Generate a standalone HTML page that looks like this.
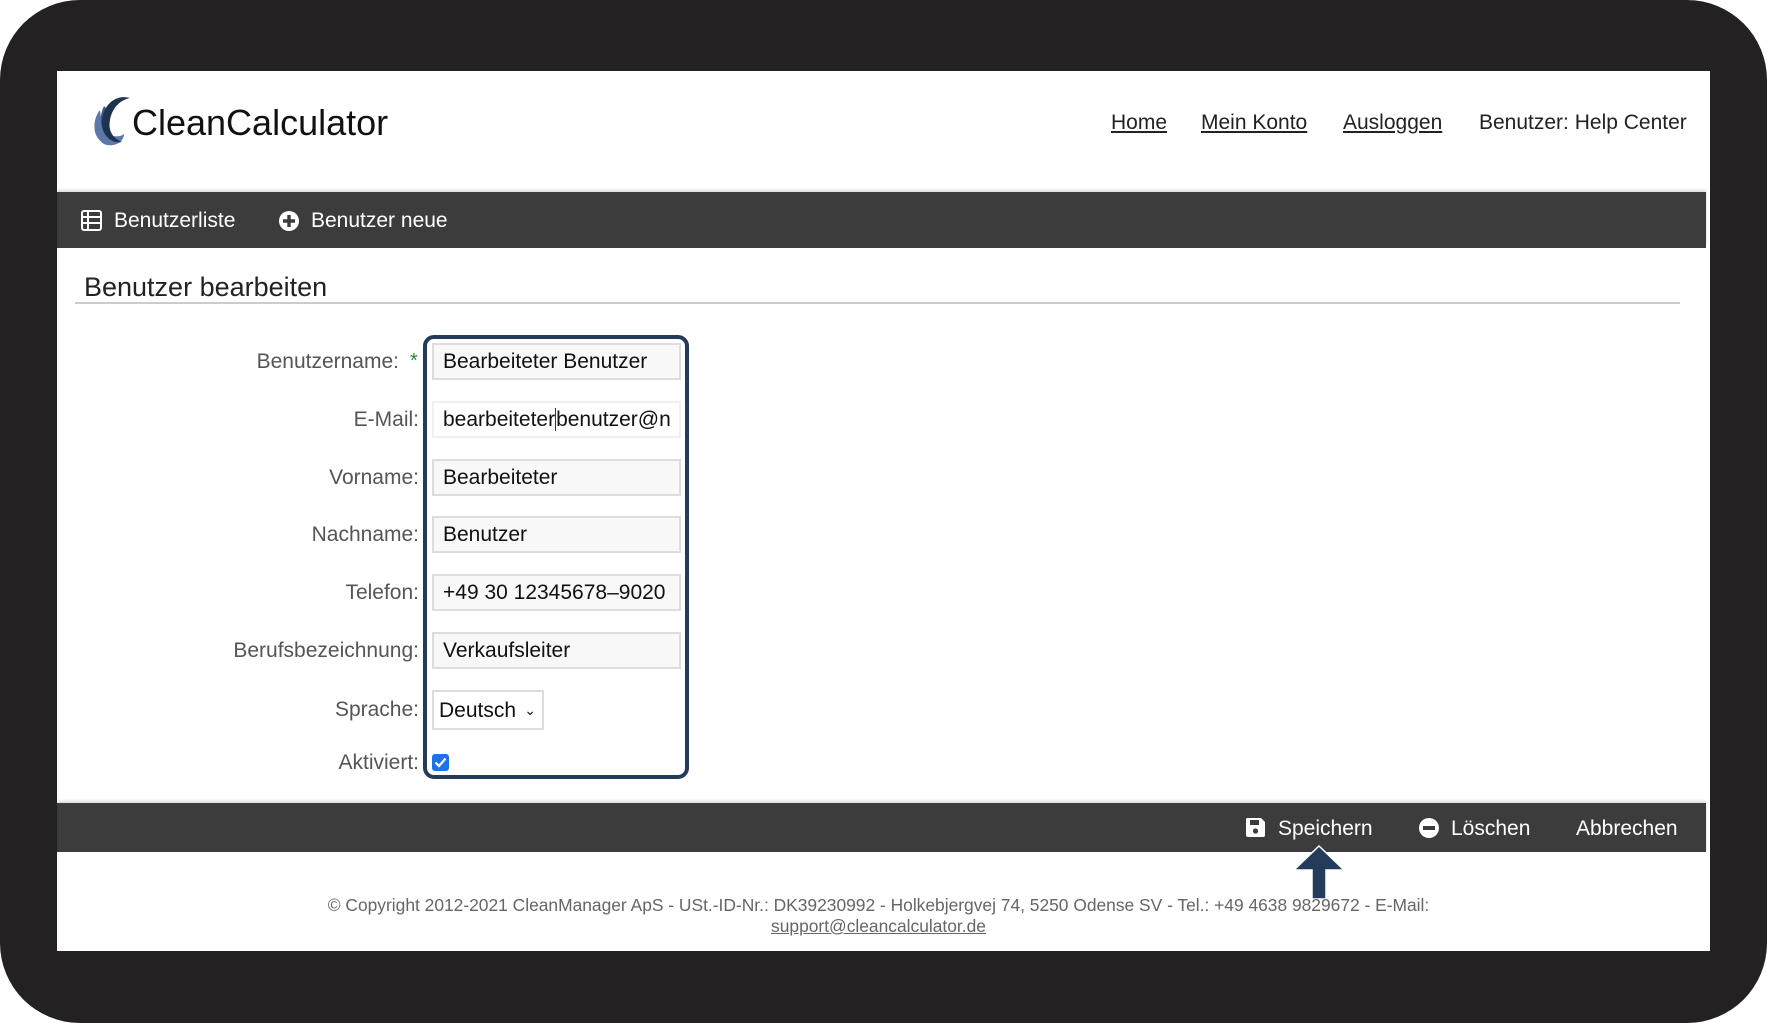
<!DOCTYPE html>
<html><head><meta charset="utf-8"><style>
*{margin:0;padding:0;box-sizing:border-box}
body{width:1767px;height:1023px;background:#fff;font-family:"Liberation Sans",sans-serif;overflow:hidden;position:relative}
.frame{position:absolute;left:0;top:0;width:1767px;height:1023px;background:#232122;border-radius:80px}
.panel{position:absolute;left:57px;top:71px;width:1653px;height:880px;background:#fff}
.a{position:absolute;white-space:nowrap}
.nav a{color:#222;text-decoration:underline}
.bar{position:absolute;background:#3c3c3c;left:57px;width:1649px;box-shadow:0 -2px 3px rgba(0,0,0,.15)}
.lbl{position:absolute;right:1348px;font-size:21px;color:#555;white-space:nowrap}
.inp{position:absolute;left:432px;width:249px;height:37px;border:2px solid #ddd;background:#f8f8f8;font-size:21px;color:#111;padding:5px 0 0 9px;overflow:hidden;white-space:nowrap}
.w{color:#fff;font-size:21px}
</style></head><body>
<div class="frame"></div>
<div class="panel"></div>
<!-- logo -->
<svg class="a" style="left:88px;top:94px" width="50" height="52" viewBox="0 0 50 52">
<path d="M8 26 C4 36 8 48 20 50 C12 44 10 36 12 28Z" fill="#8aa2cc"/>
<path d="M12 16 C4 26 4 42 16 50 C26 54 36 48 36 40 C28 46 16 40 14 30Z" fill="#5a78a8"/>
<path d="M16 12 C10 24 12 40 24 46 C18 38 18 26 22 18Z" fill="#3d5a8a"/>
<path d="M42 4 C28 0 16 10 14 26 C13 40 22 50 34 48 C24 44 20 36 22 26 C24 14 32 6 42 4Z" fill="#1f3250"/>
</svg>
<div class="a" style="left:132px;top:102px;font-size:36px;color:#111">CleanCalculator</div>
<div class="a nav" style="left:1111px;top:111px;font-size:21px;color:#222"><a>Home</a></div>
<div class="a nav" style="left:1201px;top:111px;font-size:21px"><a>Mein Konto</a></div>
<div class="a nav" style="left:1343px;top:111px;font-size:21px"><a>Ausloggen</a></div>
<div class="a" style="left:1479px;top:111px;font-size:21px;color:#222">Benutzer: Help Center</div>
<!-- top bar -->
<div class="bar" style="top:192px;height:56px"></div>
<svg class="a" style="left:81px;top:210px" width="21" height="21" viewBox="0 0 21 21"><rect x="1" y="1" width="19" height="19" rx="2" fill="none" stroke="#fff" stroke-width="2"/><path d="M1 7H20M1 13H20M7 1V20" stroke="#fff" stroke-width="2"/></svg>
<div class="a w" style="left:114px;top:209px">Benutzerliste</div>
<svg class="a" style="left:278px;top:210px" width="22" height="22" viewBox="0 0 22 22"><circle cx="11" cy="11" r="10" fill="#fff"/><path d="M11 5V17M5 11H17" stroke="#3c3c3c" stroke-width="3.4"/></svg>
<div class="a w" style="left:311px;top:209px">Benutzer neue</div>
<!-- title -->
<div class="a" style="left:84px;top:272px;font-size:27px;color:#222">Benutzer bearbeiten</div>
<div class="a" style="left:75px;top:302px;width:1605px;height:2px;background:#ccc"></div>
<!-- form -->
<div class="lbl" style="top:350px;right:1368px">Benutzername:</div>
<div class="a" style="left:410px;top:350px;font-size:20px;color:#2a8a2a">*</div>
<div class="lbl" style="top:408px">E-Mail:</div>
<div class="lbl" style="top:466px">Vorname:</div>
<div class="lbl" style="top:523px">Nachname:</div>
<div class="lbl" style="top:581px">Telefon:</div>
<div class="lbl" style="top:639px">Berufsbezeichnung:</div>
<div class="lbl" style="top:698px">Sprache:</div>
<div class="lbl" style="top:751px">Aktiviert:</div>
<div class="inp" style="top:343px">Bearbeiteter Benutzer</div>
<div class="inp" style="top:401px;border-color:#f0f0f0;background:#fff">bearbeiteter<span style="border-left:1px solid #333"></span>benutzer@n</div>
<div class="inp" style="top:459px">Bearbeiteter</div>
<div class="inp" style="top:516px">Benutzer</div>
<div class="inp" style="top:574px">+49 30 12345678–9020</div>
<div class="inp" style="top:632px">Verkaufsleiter</div>
<div class="inp" style="top:690px;width:112px;height:40px;padding:7px 0 0 5px;background:#fff">Deutsch <span style="font-size:14px;position:absolute;right:6px;top:10px">&#8964;</span></div>
<div class="a" style="left:432px;top:754px;width:17px;height:17px;background:#1a73e8;border-radius:3px"><svg width="17" height="17" viewBox="0 0 17 17"><path d="M3.5 8.5L7 12L13.5 4.5" fill="none" stroke="#fff" stroke-width="2.2"/></svg></div>
<div class="a" style="left:423px;top:335px;width:266px;height:444px;border:4px solid #253b5c;border-radius:11px"></div>
<!-- bottom bar -->
<div class="bar" style="top:803px;height:49px"></div>
<svg class="a" style="left:1245px;top:817px" width="21" height="21" viewBox="0 0 21 21"><path d="M2 1H16L20 5V18Q20 20 18 20H3Q1 20 1 18V3Q1 1 2 1Z" fill="#fff"/><rect x="5" y="3" width="9" height="5" fill="#3c3c3c"/><circle cx="10.5" cy="14" r="2.6" fill="#3c3c3c"/></svg>
<div class="a w" style="left:1278px;top:817px">Speichern</div>
<svg class="a" style="left:1418px;top:817px" width="22" height="22" viewBox="0 0 22 22"><circle cx="11" cy="11" r="10" fill="#fff"/><rect x="5" y="9" width="12" height="4" fill="#3c3c3c"/></svg>
<div class="a w" style="left:1451px;top:817px">Löschen</div>
<div class="a w" style="left:1576px;top:817px">Abbrechen</div>
<!-- arrow -->
<svg class="a" style="left:1293px;top:845px" width="52" height="55" viewBox="0 0 52 55"><path d="M26 1L51 25H33V54H19V25H1Z" fill="#253b5c" stroke="#fff" stroke-width="1.5"/></svg>
<!-- footer -->
<div class="a" style="left:0;width:1757px;text-align:center;top:895px;font-size:17.4px;color:#666">© Copyright 2012-2021 CleanManager ApS - USt.-ID-Nr.: DK39230992 - Holkebjergvej 74, 5250 Odense SV - Tel.: +49 4638 9829672 - E-Mail:</div>
<div class="a" style="left:0;width:1757px;text-align:center;top:916px;font-size:17.4px;color:#666;text-decoration:underline">support@cleancalculator.de</div>
</body></html>
